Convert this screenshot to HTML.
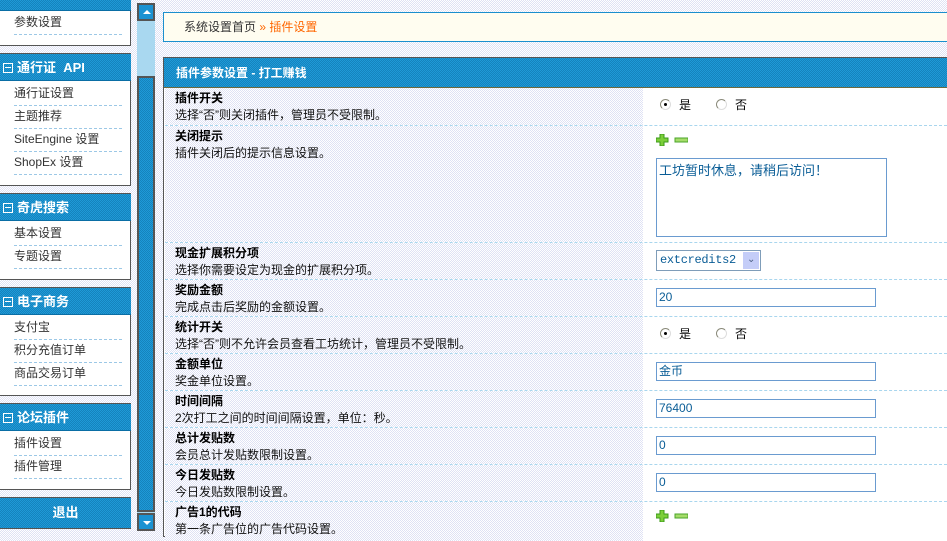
<!DOCTYPE html>
<html><head><meta charset="utf-8"><style>
*{margin:0;padding:0;box-sizing:border-box}
body{width:947px;height:535px;overflow:hidden;position:relative;font:12px "Liberation Sans","Noto Sans CJK SC","WenQuanYi Zen Hei",sans-serif;color:#000;
background:repeating-conic-gradient(#dfe2f4 0 25%,#fff 0 50%) 0 0/2px 2px}
.a{position:absolute}
.dot{background:repeating-conic-gradient(#dfe2f4 0 25%,#fff 0 50%) 0 0/2px 2px}
.box{position:absolute;left:0;width:131px;background:#fff;border:1px solid #555;border-left:none}
.hd{position:absolute;left:0;width:131px;height:27px;background:repeating-conic-gradient(#1583bd 0 25%,#1f9ad8 0 50%) 0 0/2px 2px;color:#fff;font-weight:bold;font-size:13px;line-height:27px;padding-left:3px;border-bottom:1px solid #0a6ea5}
.hd i{display:inline-block;width:10px;height:10px;border:1px solid #fff;vertical-align:-1px;margin-right:4px;position:relative;font-style:normal}
.hd i:after{content:"";position:absolute;left:1px;top:3px;width:6px;height:1px;background:#fff}
.it{position:absolute;left:14px;width:108px;height:23px;line-height:21px;color:#333;border-bottom:1px dashed #9cc8e6}
.row{position:absolute;left:165px;width:782px;border-top:1px dashed #a9d6ee}
.row .l{position:absolute;left:0;top:0;width:478px;height:100%}
.row .r{position:absolute;left:478px;top:0;right:0;height:100%;background:#fff}
.row b{position:absolute;left:10px;top:1px;font-size:12px}
.row span{position:absolute;left:10px;top:18px;color:#111}
.inp{position:absolute;left:13px;top:8px;width:220px;height:19px;border:1px solid #6a9bd0;background:#fff;color:#0a5d96;padding-left:2px;line-height:17px;font-size:12px}
.rad{position:absolute;top:8px;font-size:12px}
.rad i{display:inline-block;width:11px;height:11px;border-radius:50%;border:1px solid #8a8a7a;border-right-color:#ddd;border-bottom-color:#ddd;vertical-align:-1px;margin-right:8px;position:relative;background:#fff}
.rad i.on:after{content:"";position:absolute;left:3px;top:3px;width:3px;height:3px;background:#000;border-radius:50%}
.pm{position:absolute;left:13px;top:8px}
</style></head><body>
<div class="box" style="top:-1px;height:47px"><div class="hd" style="top:0;height:11px"></div><div class="it" style="top:12px">参数设置</div></div>
<div class="box" style="top:53px;height:133px"><div class="hd" style="top:0"><i></i>通行证 &nbsp;API</div>
<div class="it" style="top:29px">通行证设置</div><div class="it" style="top:52px">主题推荐</div><div class="it" style="top:75px">SiteEngine 设置</div><div class="it" style="top:98px">ShopEx 设置</div></div>
<div class="box" style="top:193px;height:87px"><div class="hd" style="top:0"><i></i>奇虎搜索</div>
<div class="it" style="top:29px">基本设置</div><div class="it" style="top:52px">专题设置</div></div>
<div class="box" style="top:287px;height:109px"><div class="hd" style="top:0"><i></i>电子商务</div>
<div class="it" style="top:29px">支付宝</div><div class="it" style="top:52px">积分充值订单</div><div class="it" style="top:75px">商品交易订单</div></div>
<div class="box" style="top:403px;height:87px"><div class="hd" style="top:0"><i></i>论坛插件</div>
<div class="it" style="top:29px">插件设置</div><div class="it" style="top:52px">插件管理</div></div>
<div class="box" style="top:497px;height:32px"><div class="hd" style="top:0;height:30px;line-height:30px;text-align:center;padding:0;border:none">退出</div></div>
<div class="a" style="left:137px;top:20px;width:18px;height:494px;background:#a9d8f0"></div>
<div class="a" style="left:137px;top:3px;width:18px;height:18px;background:#1b92d2;border:2px solid #555"><div class="a" style="left:4px;top:5px;border:4px solid transparent;border-bottom:4px solid #fff;border-top:none;width:0"></div></div>
<div class="a" style="left:137px;top:76px;width:18px;height:436px;background:repeating-conic-gradient(#1583bd 0 25%,#1f9ad8 0 50%) 0 0/2px 2px;border:2px solid #555"></div>
<div class="a" style="left:137px;top:513px;width:18px;height:18px;background:#1b92d2;border:2px solid #555"><div class="a" style="left:4px;top:6px;border:4px solid transparent;border-top:4px solid #fff;border-bottom:none;width:0"></div></div>
<div class="a" style="left:163px;top:12px;width:790px;height:30px;background:#fffdf0;border:1px solid #1b8fce;line-height:28px;padding-left:20px;color:#333">系统设置首页 <span style="color:#f60">» 插件设置</span></div>
<div class="a" style="left:163px;top:57px;width:790px;height:480px;border:1px solid #555;background:#fff"></div>
<div class="a" style="left:164px;top:58px;width:783px;height:30px;background:repeating-conic-gradient(#1583bd 0 25%,#1f9ad8 0 50%) 0 0/2px 2px;color:#fff;font-weight:bold;line-height:30px;padding-left:12px;border-bottom:1px solid #6a6a40">插件参数设置 - 打工赚钱</div>

<div class="row" style="top:88px;height:37px;border-top:none"><div class="l dot"></div><div class="r"><div class="rad" style="left:17px"><i class="on"></i>是</div><div class="rad" style="left:73px"><i></i>否</div></div><b>插件开关</b><span>选择“否”则关闭插件，管理员不受限制。</span></div>
<div class="row" style="top:125px;height:117px"><div class="l dot"></div><div class="r">
<svg class="pm" width="32" height="12"><path d="M4 0h4v4h4v4H8v4H4V8H0V4h4z" fill="#7ccf3a" stroke="#3b9a1a"/><rect x="19" y="4" width="13" height="4" fill="#a5dc6a" stroke="#4aa52a"/></svg>
<div class="a" style="left:13px;top:32px;width:231px;height:79px;border:1px solid #6a9bd0;color:#0a5d96;padding:1px 2px;font-size:13px">工坊暂时休息，请稍后访问！</div></div><b>关闭提示</b><span>插件关闭后的提示信息设置。</span></div>
<div class="row" style="top:242px;height:37px"><div class="l dot"></div><div class="r"><div class="a" style="left:13px;top:7px;width:105px;height:21px;border:1px solid #7f9db9;color:#0a5d96;padding-left:3px;line-height:19px;font-family:'Liberation Mono',monospace;font-size:12px;letter-spacing:-0.3px">extcredits2<div class="a" style="right:1px;top:1px;width:16px;height:17px;background:#c4cdf8;color:#4d6185;font-size:10px;text-align:center;line-height:17px">&#x2304;</div></div></div><b>现金扩展积分项</b><span>选择你需要设定为现金的扩展积分项。</span></div>
<div class="row" style="top:279px;height:37px"><div class="l dot"></div><div class="r"><div class="inp">20</div></div><b>奖励金额</b><span>完成点击后奖励的金额设置。</span></div>
<div class="row" style="top:316px;height:37px"><div class="l dot"></div><div class="r"><div class="rad" style="left:17px"><i class="on"></i>是</div><div class="rad" style="left:73px"><i></i>否</div></div><b>统计开关</b><span>选择“否”则不允许会员查看工坊统计，管理员不受限制。</span></div>
<div class="row" style="top:353px;height:37px"><div class="l dot"></div><div class="r"><div class="inp">金币</div></div><b>金额单位</b><span>奖金单位设置。</span></div>
<div class="row" style="top:390px;height:37px"><div class="l dot"></div><div class="r"><div class="inp">76400</div></div><b>时间间隔</b><span>2次打工之间的时间间隔设置，单位：秒。</span></div>
<div class="row" style="top:427px;height:37px"><div class="l dot"></div><div class="r"><div class="inp">0</div></div><b>总计发贴数</b><span>会员总计发贴数限制设置。</span></div>
<div class="row" style="top:464px;height:37px"><div class="l dot"></div><div class="r"><div class="inp">0</div></div><b>今日发贴数</b><span>今日发贴数限制设置。</span></div>
<div class="row" style="top:501px;height:40px"><div class="l dot"></div><div class="r"><svg class="pm" width="32" height="12"><path d="M4 0h4v4h4v4H8v4H4V8H0V4h4z" fill="#7ccf3a" stroke="#3b9a1a"/><rect x="19" y="4" width="13" height="4" fill="#a5dc6a" stroke="#4aa52a"/></svg></div><b>广告1的代码</b><span>第一条广告位的广告代码设置。</span></div>
</body></html>
